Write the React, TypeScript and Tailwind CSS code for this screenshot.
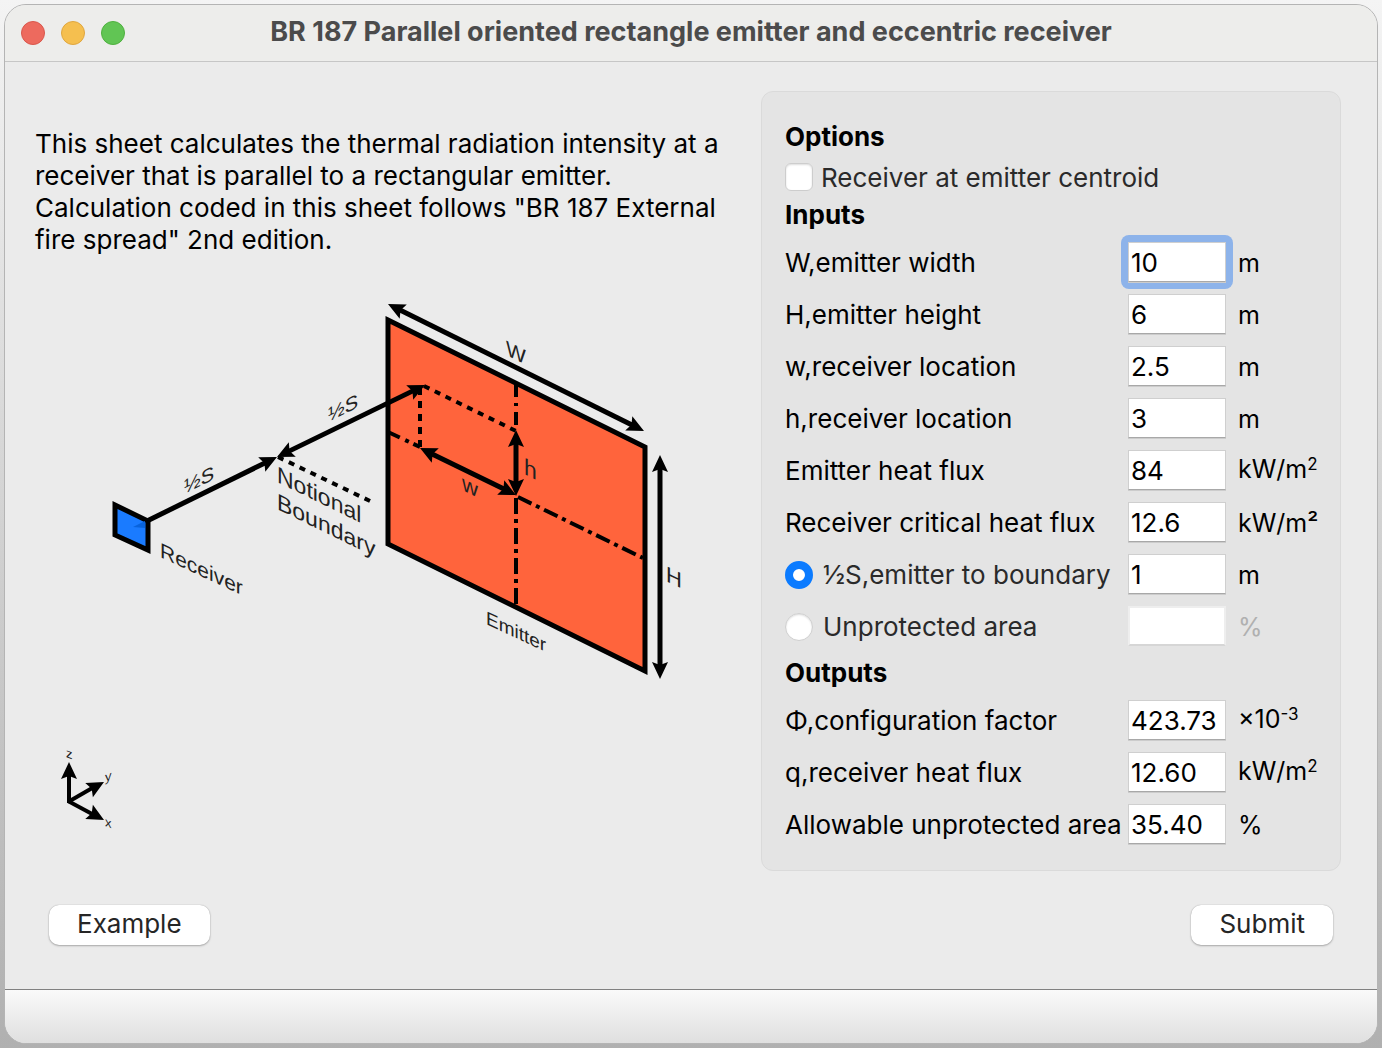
import { useState, type ReactNode } from "react";

type Point = [number, number];

function ArrowHead({ tip, from }: { tip: Point; from: Point }) {
  const angle = (Math.atan2(tip[1] - from[1], tip[0] - from[0]) * 180) / Math.PI;
  return (
    <path
      d="M0 0L-17 -8L-14 0L-17 8Z"
      fill="#000"
      transform={`translate(${tip[0]} ${tip[1]}) rotate(${angle})`}
    />
  );
}

function Arrow({ a, b, double = false }: { a: Point; b: Point; double?: boolean }) {
  const length = Math.hypot(b[0] - a[0], b[1] - a[1]);
  const ux = ((b[0] - a[0]) / length) * 10;
  const uy = ((b[1] - a[1]) / length) * 10;
  return (
    <g>
      <line
        x1={double ? a[0] + ux : a[0]}
        y1={double ? a[1] + uy : a[1]}
        x2={b[0] - ux}
        y2={b[1] - uy}
        stroke="#000"
        strokeWidth="5"
      />
      <ArrowHead tip={b} from={a} />
      {double && <ArrowHead tip={a} from={b} />}
    </g>
  );
}

function SkewText({ x, y, angle, size, children }: { x: number; y: number; angle: number; size: number; children: ReactNode }) {
  return (
    <text transform={`translate(${x} ${y}) skewY(${angle})`} fontSize={size} fill="#222">
      {children}
    </text>
  );
}

function Diagram() {
  return (
    <svg
      viewBox="35 288 680 550"
      className="mt-8 block w-[680px] max-w-full font-['Liberation_Sans',Arial,sans-serif]"
      role="img"
      aria-label="Rectangular emitter and parallel receiver geometry"
    >
      <polygon points="388,320 645,447 645,671 388,544" fill="#ff643c" stroke="#000" strokeWidth="5" />
      <g stroke="#000" strokeWidth="4" fill="none">
        <path d="M516 384V430" strokeDasharray="13 6 3 6" />
        <path d="M516 498V605" strokeDasharray="16 5 4 5" />
        <path d="M388 432L420 447" strokeDasharray="13 6 4 5" />
        <path d="M518 497L643 558" strokeDasharray="15 5 4 5" />
        <path d="M424 386L516 431" strokeDasharray="6 6" />
        <path d="M420 388V447" strokeDasharray="7 6" />
        <path d="M278 457L370 501" strokeDasharray="6 6" />
      </g>
      <Arrow a={[388, 304]} b={[644, 431]} double />
      <Arrow a={[660, 455]} b={[660, 679]} double />
      <polygon points="115,505 148,521 148,550 115,535" fill="#1a7bff" stroke="#000" strokeWidth="5" />
      <polygon points="133,527 145,521 145,528" fill="#0863dd" />
      <Arrow a={[147, 521]} b={[277, 457]} />
      <Arrow a={[277, 457]} b={[425, 385]} double />
      <Arrow a={[420, 448]} b={[516, 495]} double />
      <Arrow a={[516, 430]} b={[516, 496]} double />
      <SkewText x={506} y={355} angle={26} size={21}>W</SkewText>
      <SkewText x={666} y={581} angle={26} size={22}>H</SkewText>
      <SkewText x={524} y={474} angle={26} size={23}>h</SkewText>
      <SkewText x={462} y={490} angle={26} size={22}>w</SkewText>
      <SkewText x={184} y={494} angle={-26} size={20}>½S</SkewText>
      <SkewText x={328} y={422} angle={-26} size={20}>½S</SkewText>
      <SkewText x={277} y={482} angle={26} size={23}>Notional</SkewText>
      <SkewText x={277} y={509} angle={26} size={23}>Boundary</SkewText>
      <SkewText x={160} y={557} angle={25} size={21}>Receiver</SkewText>
      <SkewText x={486} y={624} angle={25} size={19}>Emitter</SkewText>
      <g stroke="#000" strokeWidth="4">
        <path d="M69 803V772" />
        <path d="M68 802L94 787" />
        <path d="M68 801L94 815" />
      </g>
      <ArrowHead tip={[69, 762]} from={[69, 801]} />
      <ArrowHead tip={[104, 782]} from={[69, 801]} />
      <ArrowHead tip={[104, 820]} from={[69, 801]} />
      <SkewText x={66} y={757} angle={20} size={13}>z</SkewText>
      <SkewText x={105} y={782} angle={-20} size={13}>y</SkewText>
      <SkewText x={105} y={826} angle={20} size={13}>x</SkewText>
    </svg>
  );
}

const fieldClass =
  "h-10 w-full rounded-none border border-[#cfcfcf] border-b-[#a8a8a8] bg-white px-[2px] text-black shadow-[0_1px_0_#cccccc] outline-none";

const rowClass = "grid h-[52px] grid-cols-[minmax(0,1fr)_98px_80px] items-center gap-x-3 whitespace-nowrap";

function Field({
  id,
  label,
  unit,
  value,
  active = false,
  readOnly = false,
}: {
  id: string;
  label: string;
  unit: ReactNode;
  value: string;
  active?: boolean;
  readOnly?: boolean;
}) {
  return (
    <div className={rowClass}>
      <label htmlFor={id} className="pt-[2px]">{label}</label>
      <div className={active ? "-m-[7px] rounded-lg bg-[#8db3ea] p-[7px]" : ""}>
        <input id={id} type="text" defaultValue={value} readOnly={readOnly} className={fieldClass} />
      </div>
      {unit}
    </div>
  );
}

function Unit({ children }: { children: ReactNode }) {
  return <span className="pt-[2px] text-[25px]">{children}</span>;
}

function PowerUnit({ base, power }: { base: string; power: string }) {
  return (
    <span className="pb-[2px] text-[25px]">
      {base}
      <sup className="text-[17px] leading-none">{power}</sup>
    </span>
  );
}

function Radio({ label, checked, onSelect }: { label: string; checked: boolean; onSelect: () => void }) {
  return (
    <label className="flex items-center gap-[10px] pt-[2px] text-[#2a2a2a]">
      <input
        type="radio"
        name="mode"
        checked={checked}
        onChange={onSelect}
        className="size-7 flex-none appearance-none rounded-full border border-[#cfcfcf] bg-white shadow-[inset_0_1px_2px_#dddddd] checked:border-[8px] checked:border-[#0b7bff] checked:shadow-none"
      />
      {label}
    </label>
  );
}

const buttonClass = "h-10 rounded-[10px] bg-white px-7 pb-[2px] shadow-[0_0_1px_#999999,0_1px_2px_#aaaaaa]";

export default function App() {
  const [mode, setMode] = useState("boundary");
  const byBoundary = mode === "boundary";
  return (
    <div className="flex min-h-screen flex-col bg-linear-to-b from-[#f4f4f4] via-[#d2d2d2] to-[#b0b0b0] p-1 font-[Inter,sans-serif] text-[26px] leading-8 text-black">
      <div className="flex flex-1 flex-col overflow-hidden rounded-[22px] border border-[#b4b4b4] bg-[#ebebeb]">
        <header className="grid h-[57px] flex-none grid-cols-[1fr_auto_1fr] items-center border-b border-[#c6c6c6] bg-[#ededeb] px-4">
          <div className="flex gap-4">
            <button aria-label="Close" className="size-6 rounded-full border border-[#d9574c] bg-[#ed6a5e]" />
            <button aria-label="Minimize" className="size-6 rounded-full border border-[#dfa63f] bg-[#f5bf4f]" />
            <button aria-label="Zoom" className="size-6 rounded-full border border-[#4fb03f] bg-[#61c554]" />
          </div>
          <h1 className="pb-[2px] text-[27px] font-bold text-[#4b4b4b]">
            BR 187 Parallel oriented rectangle emitter and eccentric receiver
          </h1>
        </header>

        <main className="flex flex-1 flex-col pt-[29px]">
          <div className="flex items-start justify-between gap-4 pr-9 pl-[30px]">
            <section className="min-w-0 flex-1 pt-[37px]">
              <p className="max-w-[700px]">
                This sheet calculates the thermal radiation intensity at a receiver that is parallel to a rectangular
                emitter. Calculation coded in this sheet follows "BR 187 External fire spread" 2nd edition.
              </p>
              <Diagram />
            </section>

            <form id="calc" className="w-[580px] flex-none rounded-xl border border-[#dadada] bg-[#e4e4e4] pt-6 pr-[22px] pb-5 pl-[23px]">
              <h2 className="flex h-[41px] items-center font-bold">Options</h2>
              <label className="flex h-10 items-center gap-2 text-[#2a2a2a]">
                <input
                  type="checkbox"
                  className="size-7 appearance-none rounded-md border border-[#cdcdcd] bg-white shadow-[inset_0_1px_2px_#dddddd] checked:bg-[#0b7bff]"
                />
                <span className="pt-[2px]">Receiver at emitter centroid</span>
              </label>
              <h2 className="mb-1 flex h-[35px] items-center font-bold">Inputs</h2>
              <Field id="width" label="W,emitter width" unit={<Unit>m</Unit>} value="10" active />
              <Field id="height" label="H,emitter height" unit={<Unit>m</Unit>} value="6" />
              <Field id="w" label="w,receiver location" unit={<Unit>m</Unit>} value="2.5" />
              <Field id="h" label="h,receiver location" unit={<Unit>m</Unit>} value="3" />
              <Field id="flux" label="Emitter heat flux" unit={<PowerUnit base="kW/m" power="2" />} value="84" />
              <Field id="critical" label="Receiver critical heat flux" unit={<Unit>kW/m²</Unit>} value="12.6" />
              <div className={rowClass}>
                <Radio label="½S,emitter to boundary" checked={byBoundary} onSelect={() => setMode("boundary")} />
                <input aria-label="Emitter to boundary" type="text" defaultValue="1" disabled={!byBoundary} className={fieldClass} />
                <Unit>m</Unit>
              </div>
              <div className={rowClass}>
                <Radio label="Unprotected area" checked={!byBoundary} onSelect={() => setMode("area")} />
                <input
                  aria-label="Unprotected area percentage"
                  type="text"
                  disabled={byBoundary}
                  className="h-10 w-full border-2 border-[#eeeeee] border-b-[#d6d6d6] bg-white px-[2px]"
                />
                <span className="pt-[2px] text-[25px] text-[#b0b0b0]">%</span>
              </div>
              <h2 className="flex h-[42px] items-center font-bold">Outputs</h2>
              <Field id="phi" label="Φ,configuration factor" unit={<PowerUnit base="×10" power="-3" />} value="423.73" readOnly />
              <Field id="q" label="q,receiver heat flux" unit={<PowerUnit base="kW/m" power="2" />} value="12.60" readOnly />
              <Field id="allowable" label="Allowable unprotected area" unit={<Unit>%</Unit>} value="35.40" readOnly />
            </form>
          </div>

          <div className="mt-[34px] mb-11 flex justify-between pr-11 pl-11 text-[#262626]">
            <button type="button" className={buttonClass}>
              Example
            </button>
            <button type="submit" form="calc" className={buttonClass}>
              Submit
            </button>
          </div>
        </main>

        <footer className="h-[54px] flex-none border-t border-[#808080] bg-linear-to-b from-[#fafafa] to-[#dfdfdf]" />
      </div>
    </div>
  );
}
